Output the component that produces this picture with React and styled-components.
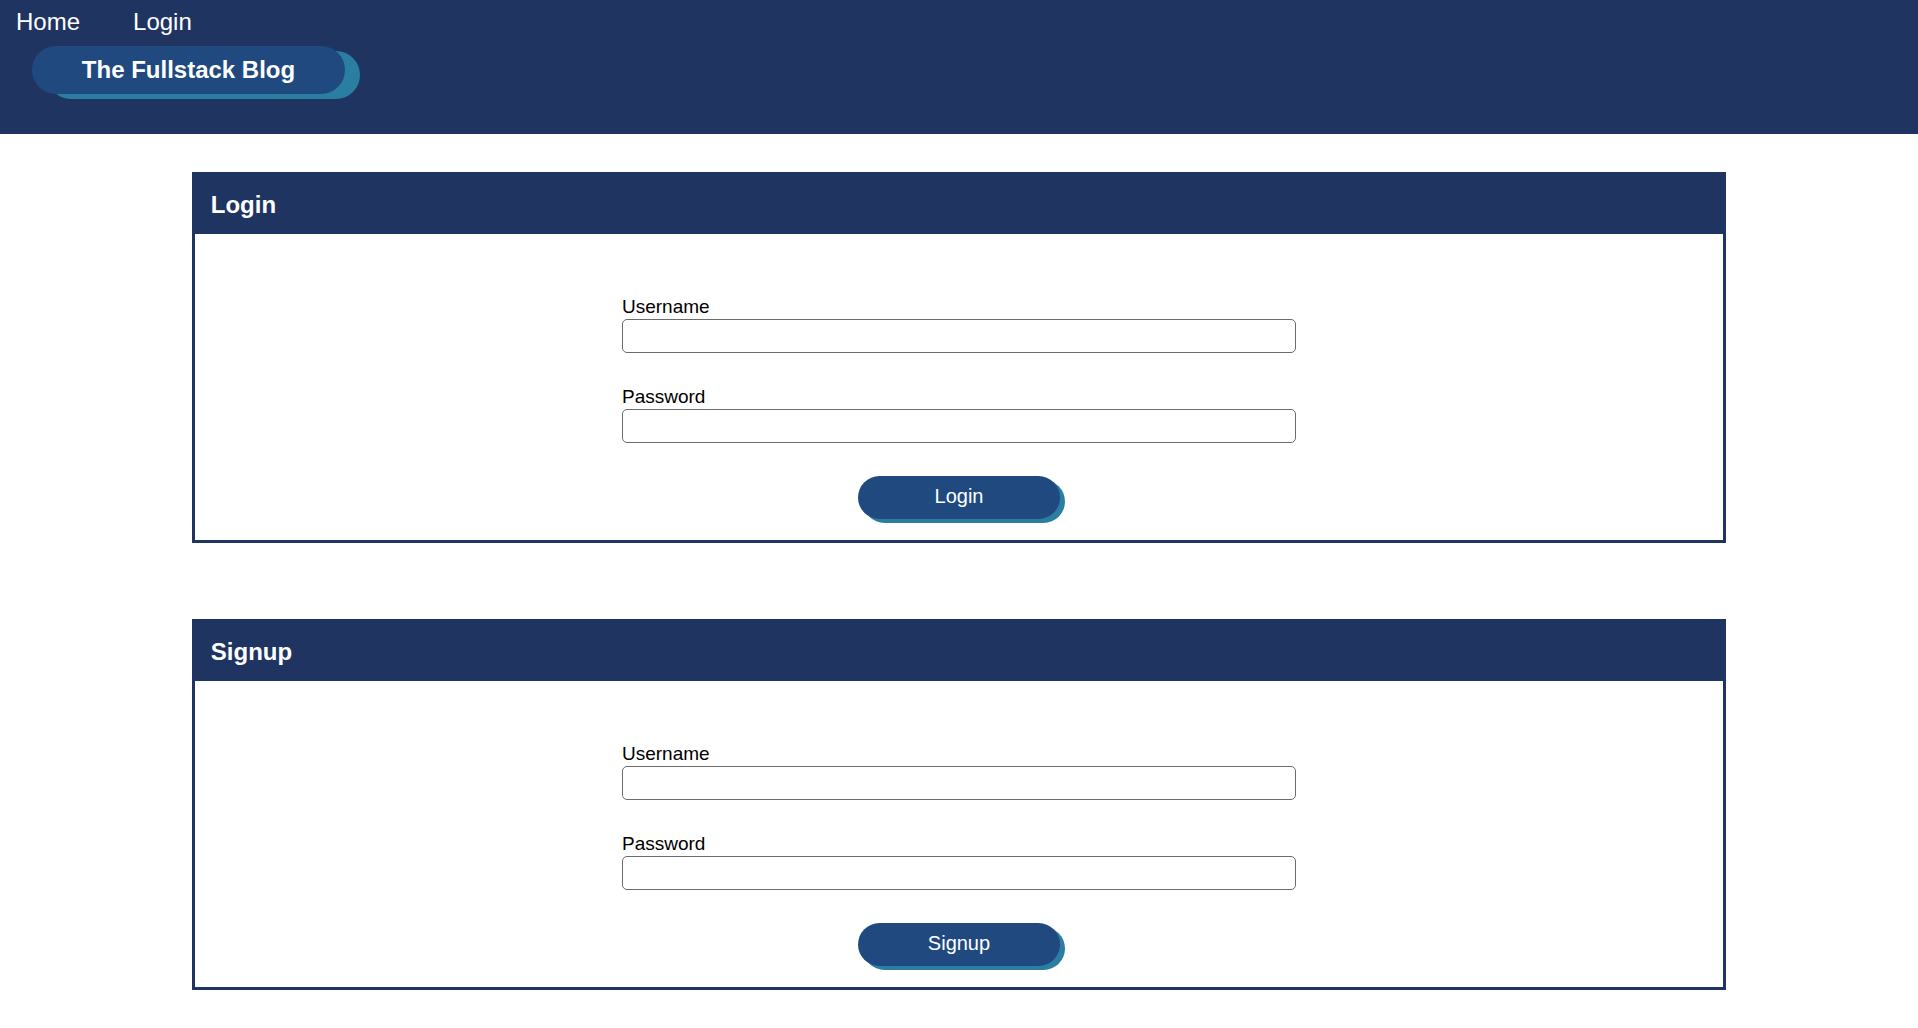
import React from "react";
import styled, { createGlobalStyle } from "styled-components";

const GlobalStyle = createGlobalStyle`
  body {
    margin: 0;
    background: #ffffff;
    font-family: "Liberation Sans", Arial, sans-serif;
  }
`

const HEADER = styled.header`
  background: #1f3461;
  padding: 8px 16px 40px 16px;
`
const NAV = styled.nav`
  display: flex;
  gap: 53px;
  a {
    color: #ffffff;
    font-size: 24px;
    text-decoration: none;
  }
`
const BRAND = styled.div`
  margin: 10px 0 0 16px;
  width: 313px;
  height: 48px;
  border-radius: 24px;
  background: #204a7f;
  box-shadow: 15px 5px 0 #2a7ea1;
  display: flex;
  align-items: center;
  justify-content: center;
  color: #ffffff;
  font-size: 24px;
  font-weight: bold;
`
const MAIN = styled.main`
  display: flex;
  flex-direction: column;
  gap: 76px;
  padding: 38px 0 30px 0;
`
const CARD = styled.section`
  width: 80%;
  margin: 0 auto;
  border: 3px solid #1f3461;
  box-sizing: border-box;
`
const CARDHEAD = styled.h2`
  margin: 0;
  background: #1f3461;
  color: #ffffff;
  font-size: 24px;
  font-weight: bold;
  padding: 16px 16px 15px 16px;
  line-height: 28px;
`
const FORM = styled.form`
  width: 674px;
  margin: 0 auto;
  padding: 62px 0 21px 0;
  display: flex;
  flex-direction: column;
`
const LABEL = styled.label`
  font-size: 19px;
  line-height: 21px;
  color: #000000;
  margin-bottom: 2px;
`
const INPUT = styled.input`
  height: 34px;
  box-sizing: border-box;
  border: 1px solid #6b6b6b;
  border-radius: 5px;
  margin-bottom: 33px;
  font-size: 16px;
`
const BUTTON = styled.button`
  align-self: center;
  width: 202px;
  height: 43px;
  border: none;
  border-radius: 22px;
  background: #204a7f;
  box-shadow: 5px 4px 0 #2a7ea1;
  color: #ffffff;
  font-family: "Liberation Sans", Arial, sans-serif;
  font-size: 20px;
  padding: 0 0 2px 0;
  cursor: pointer;
`

function FormCard({ title }) {
  return (
    <CARD>
      <CARDHEAD>{title}</CARDHEAD>
      <FORM onSubmit={e => e.preventDefault()}>
        <LABEL>Username</LABEL>
        <INPUT type="text" />
        <LABEL>Password</LABEL>
        <INPUT type="password" />
        <BUTTON type="submit">{title}</BUTTON>
      </FORM>
    </CARD>
  )
}

function App() {
  return (
    <>
      <GlobalStyle />
      <HEADER>
        <NAV>
          <a href="#">Home</a>
          <a href="#">Login</a>
        </NAV>
        <BRAND>The Fullstack Blog</BRAND>
      </HEADER>
      <MAIN>
        <FormCard title="Login" />
        <FormCard title="Signup" />
      </MAIN>
    </>
  )
}

export default App;
